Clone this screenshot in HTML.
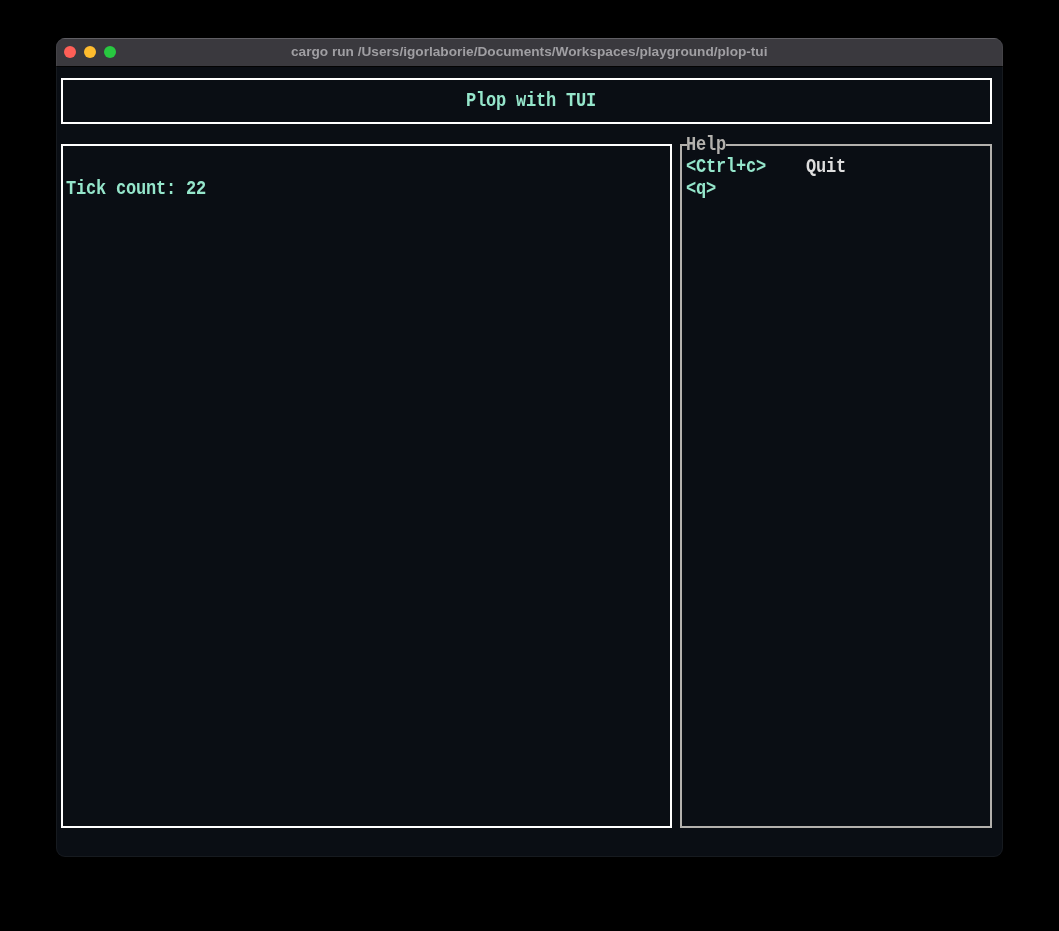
<!DOCTYPE html>
<html>
<head>
<meta charset="utf-8">
<style>
html,body{margin:0;padding:0;-webkit-font-smoothing:antialiased;}
body{width:1059px;height:931px;background:#000;position:relative;overflow:hidden;}
.win{position:absolute;left:56px;top:38px;width:947px;height:819px;background:#0a0e14;border-radius:9px;overflow:hidden;}
.ol{position:absolute;left:56px;top:38px;width:947px;height:819px;box-sizing:border-box;border-radius:9px;border:1px solid rgba(255,255,255,0.05);}
.bar{position:absolute;left:0;top:0;width:947px;height:28px;background:#3a393e;border-bottom:1px solid #030303;}
.hl{position:absolute;left:0;top:0;width:947px;height:1px;background:#58575c;}
.dot{position:absolute;width:12px;height:12px;border-radius:50%;top:8px;}
.ttl{position:absolute;left:291px;top:44px;font:bold 13.65px "Liberation Sans",sans-serif;color:#a09fa3;white-space:nowrap;line-height:16px;will-change:transform;}
.box{position:absolute;box-sizing:border-box;border:2px solid #fff;}
.t{position:absolute;font-family:"Liberation Mono",monospace;font-weight:bold;font-size:17px;letter-spacing:-0.2px;line-height:22px;white-space:pre;transform-origin:0 15.5px;transform:scaleY(1.17);margin-top:3px;will-change:transform;}
.cy{color:#95e6cb;}
.gr{color:#b3b1ad;}
.wh{color:#dedede;}
</style>
</head>
<body>
<div class="win">
  <div class="bar"><div class="hl"></div>
    <div class="dot" style="left:8px;background:#fe5f57"></div>
    <div class="dot" style="left:28px;background:#febc2e"></div>
    <div class="dot" style="left:48px;background:#28c840"></div>
  </div>
</div>
<div class="ol"></div>
<div class="ttl">cargo run /Users/igorlaborie/Documents/Workspaces/playground/plop-tui</div>

<div class="box" style="left:61px;top:78px;width:931px;height:46px;"></div>
<div class="box" style="left:61px;top:144px;width:611px;height:684px;"></div>
<div class="box" style="left:680px;top:144px;width:312px;height:684px;border-color:#b3b1ad;"></div>
<div style="position:absolute;left:687px;top:140px;width:39px;height:8px;background:#0a0e14;"></div>

<div class="t cy" style="left:466px;top:88px;">Plop with TUI</div>
<div class="t cy" style="left:66px;top:176px;">Tick count: 22</div>
<div class="t gr" style="left:686px;top:132px;">Help</div>
<div class="t cy" style="left:686px;top:154px;">&lt;Ctrl+c&gt;</div>
<div class="t wh" style="left:806px;top:154px;">Quit</div>
<div class="t cy" style="left:686px;top:176px;">&lt;q&gt;</div>
</body>
</html>
